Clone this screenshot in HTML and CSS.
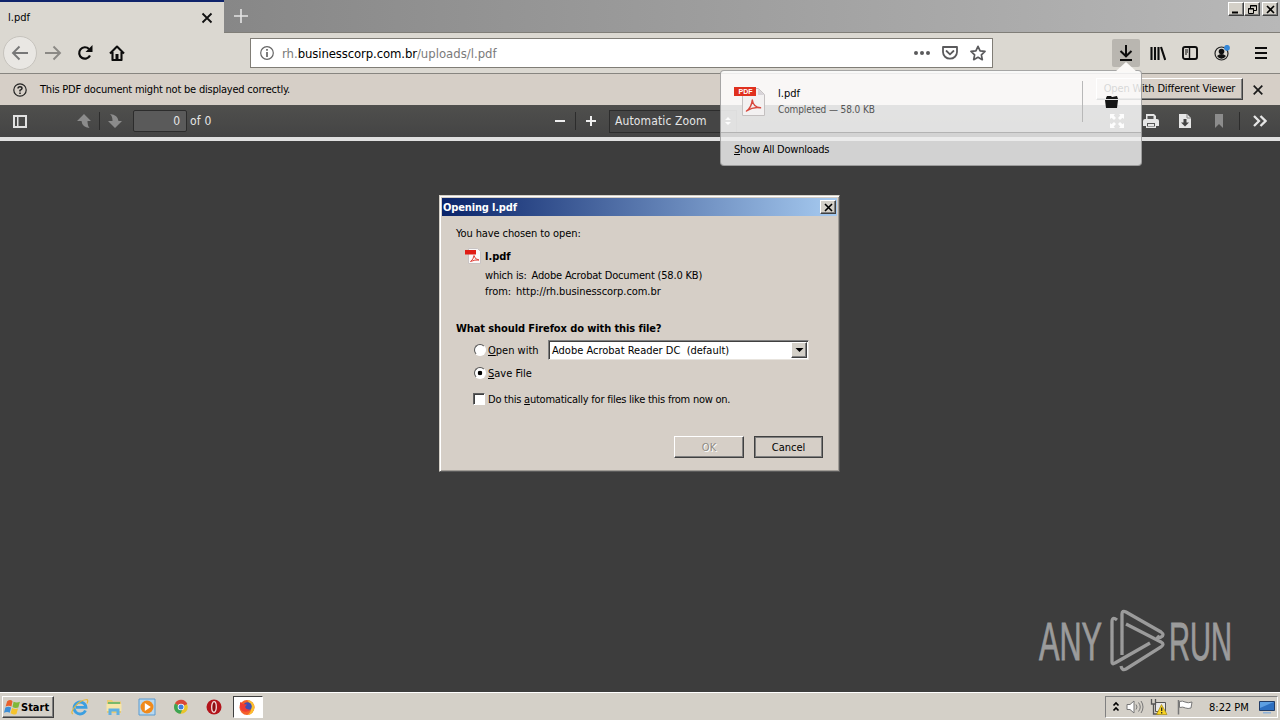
FILE: index.html
```html
<!DOCTYPE html>
<html lang="en">
<head>
    <meta charset="UTF-8">
    <title>l.pdf</title>
    <link rel="stylesheet" href="styles.css">
</head>
<body>

    <!-- tabs -->
    <div class="tabstrip">
        <div class="tab">
            <span class="tab-title">l.pdf</span>
            <svg width="12" height="12" viewBox="0 0 12 12"><path d="M1.5 1.5l9 9M10.5 1.5l-9 9" stroke="#111" stroke-width="1.8"/></svg>
        </div>
        <svg class="new-tab" width="14" height="14" viewBox="0 0 14 14"><path d="M7 0v14M0 7h14" stroke="#e4e4e4" stroke-width="1.6"/></svg>
        <div class="win-buttons">
            <span class="win-btn"><svg width="13" height="11"><path d="M2 8.500h6" stroke="#000" stroke-width="2"/></svg></span>
            <span class="win-btn"><svg width="13" height="11"><path d="M4.500 4V1.500h6v5H8M4 2h7M2.500 4.500h5v5h-5zM2 5h6" fill="none" stroke="#000"/></svg></span>
            <span class="win-btn last"><svg width="13" height="11"><path d="M3 2l7 7M10 2l-7 7" stroke="#000" stroke-width="1.6"/></svg></span>
        </div>
    </div>

    <!-- navigation -->
    <div class="navbar">
        <div class="back"><svg width="18" height="16" viewBox="0 0 18 16"><path d="M17 8H2M8.500 1.500L2 8l6.500 6.500" fill="none" stroke="#777" stroke-width="1.9"/></svg></div>
        <svg class="forward" width="18" height="16" viewBox="0 0 18 16"><path d="M1 8h15M9.500 1.500L16 8l-6.500 6.500" fill="none" stroke="#8b8985" stroke-width="1.9"/></svg>
        <svg class="reload" width="16" height="16" viewBox="0 0 16 16"><path d="M13 10.500A5.700 5.700 0 1 1 12 4" fill="none" stroke="#0c0c0c" stroke-width="2.2"/><path d="M15.500 0v7h-7z" fill="#0c0c0c"/></svg>
        <svg class="home" width="16" height="16" viewBox="0 0 16 16"><path d="M1 8.500L8 1.500l7 7M3.500 7v8h9V7" fill="none" stroke="#0c0c0c" stroke-width="2.1" stroke-linejoin="round"/><path d="M6.500 9h3v5h-3z" fill="#0c0c0c"/></svg>
        <div class="urlbar">
            <svg width="14" height="14" viewBox="0 0 14 14"><circle cx="7" cy="7" r="6.3" fill="none" stroke="#666" stroke-width="1.2"/><path d="M7 6v5M7 3v1.800" stroke="#666" stroke-width="1.7"/></svg>
            <div class="url">rh.<b>businesscorp.com.br</b>/uploads/l.pdf</div>
            <svg width="16" height="16" viewBox="0 0 16 16" fill="#5a5a5c"><circle cx="2" cy="8" r="2"/><circle cx="8" cy="8" r="2"/><circle cx="14" cy="8" r="2"/></svg>
            <svg width="16" height="16" viewBox="0 0 16 16" fill="none" stroke="#5a5a5c" stroke-width="1.8"><path d="M1 2h14v5a7 6.700 0 0 1-14 0z" stroke-linejoin="round"/><path d="M4.500 6L8 9.300 11.500 6" stroke-linecap="round"/></svg>
            <svg width="16" height="16" viewBox="0 0 16 16"><path d="M8 1.300l2.100 4.500 4.900.6-3.600 3.400.9 4.900L8 12.300l-4.300 2.400.9-4.900L1 6.400l4.900-.6z" fill="none" stroke="#5a5a5c" stroke-width="1.7" stroke-linejoin="round"/></svg>
        </div>
        <div class="nav-tools">
            <div class="downloads"><svg width="16" height="18" viewBox="0 0 16 18"><path d="M8 1v11M2.500 7L8 12.300 13.500 7M2 16h12" fill="none" stroke="#0c0c0c" stroke-width="2"/></svg></div>
            <svg width="16" height="16" viewBox="0 0 16 16"><path d="M1.500 2v13M5 2v13M8.500 2v13M11 2l4.200 13" stroke="#0c0c0c" stroke-width="2.1"/></svg>
            <svg width="16" height="16" viewBox="0 0 16 16" fill="none" stroke="#0c0c0c"><rect x="1" y="2" width="14" height="12" rx="2" stroke-width="1.9"/><path d="M7.500 2v12" stroke-width="1.4"/><path d="M3 5h3M3 7h3M3 9h2"/></svg>
            <svg width="16" height="16" viewBox="0 0 16 16"><circle cx="7.5" cy="8.5" r="6.5" fill="none" stroke="#222" stroke-width="1.2"/><circle cx="7.5" cy="6.5" r="2.8" fill="#111"/><path d="M3 11q4.500-4 9 0-1.800 2.700-4.500 2.700T3 11z" fill="#111"/><circle cx="13" cy="2.8" r="2.9" fill="#3387d8"/></svg>
            <svg class="menu-icon" width="12" height="14" viewBox="0 0 12 14"><path d="M0 2h12M0 7h12M0 12h12" stroke="#0c0c0c" stroke-width="2"/></svg>
        </div>
    </div>

    <!-- notification -->
    <div class="notice">
        <svg width="14" height="14" viewBox="0 0 14 14"><circle cx="7" cy="7" r="6.2" fill="none" stroke="#222" stroke-width="1.2"/><path d="M5 5.500Q5 3.700 7 3.700T9 5.400Q9 6.300 7 7.300V8.500M7 9.500v1.500" fill="none" stroke="#222" stroke-width="1.5"/></svg>
        <span class="notice-text">This PDF document might not be displayed correctly.</span>
        <div class="viewer-btn">Open With Different Viewer</div>
        <svg width="10" height="10" viewBox="0 0 10 10"><path d="M.7.7l8.600 8.600M9.300.7L.7 9.300" stroke="#1a1a1a" stroke-width="1.7"/></svg>
    </div>

    <!-- pdf toolbar -->
    <div class="pdfbar">
        <svg class="sidebar-icon" width="14" height="13" viewBox="0 0 14 13"><path d="M0 0h14v13H0zM2 2v9h2V2zM5.500 2v9H12V2z" fill="#e2e2e2" fill-rule="evenodd"/></svg>
        <svg class="page-up" width="14" height="14" viewBox="0 0 14 14"><path d="M7 0l7 7h-3.500q0 5 2 7Q5 13 4.500 7H0z" fill="#8c8c8c"/></svg>
        <i class="sep"></i>
        <svg class="page-down" width="14" height="14" viewBox="0 0 14 14"><path d="M7 14l7-7h-3.500Q10 1 2 0q2.500 2 2.500 7H0z" fill="#8c8c8c"/></svg>
        <div class="page-input">0</div>
        <span class="page-count">of 0</span>
        <svg class="zoom-out" width="10" height="10"><path d="M0 5h10" stroke="#eee" stroke-width="2"/></svg>
        <i class="sep"></i>
        <svg class="zoom-in" width="10" height="10"><path d="M0 5h10M5 0v10" stroke="#eee" stroke-width="2"/></svg>
        <div class="zoom-select"><span>Automatic Zoom</span><svg width="6" height="8"><path d="M3 0l3 3H0zM0 5h6L3 8z" fill="#eee"/></svg></div>
        <div class="pdf-tools">
            <svg width="14" height="14" viewBox="0 0 14 14"><path d="M0 0h5L3.700 1.500 6 4 4 6 1.500 3.700 0 5zM14 0v5l-1.500-1.300L10 6 8 4l2.300-2.500L9 0zM0 14V9l1.500 1.300L4 8l2 2-2.300 2.500L5 14zM14 14H9l1.300-1.500L8 10l2-2 2.500 2.300L14 9z" fill="#eee"/></svg>
            <svg class="print" width="16" height="14" viewBox="0 0 16 14"><path d="M3 0h8l2 2v3H3zM0 7q0-2 2-2h12q2 0 2 2v5h-3v2H3v-2H0z" fill="#e6e6e6"/><path d="M4.500 2h6v3h-6zM4 9h8v3.500H4z" fill="#555"/><path d="M5 10h6v2H5z" fill="#e6e6e6"/></svg>
            <svg class="save-pdf" width="12" height="14" viewBox="0 0 12 14"><path d="M0 0h8l4 4v10H0z" fill="#e6e6e6"/><path d="M8 0v4h4" fill="none" stroke="#888"/><path d="M4.500 5h3v3.500H10L6 12.500 2 8.500h2.500z" fill="#444"/></svg>
            <svg class="bookmark" width="8" height="14" viewBox="0 0 8 14"><path d="M0 0h8v14l-4-4-4 4z" fill="#8c8c8c"/></svg>
            <i class="sep"></i>
            <svg width="14" height="12" viewBox="0 0 14 12"><path d="M1 1l5 5-5 5M7.500 1l5 5-5 5" fill="none" stroke="#e6e6e6" stroke-width="2.3"/></svg>
        </div>
    </div>

    <div class="viewer"></div>

    <!-- taskbar -->
    <div class="taskbar">
        <div class="start">
            <svg width="17" height="17" viewBox="0 0 16 16"><path d="M3 2q3-2 5 0L7 7Q4.500 5.500 1.500 7z" fill="#e8602c"/><path d="M9 2.500q3 1.500 6 0L13.500 8q-3 1-5.500-.5z" fill="#7fb83a"/><path d="M1.300 8q3-1.500 5.400 0l-1.300 5Q3 11.500 0 13z" fill="#3d8ed6"/><path d="M7.600 8.500q2.700 1.500 5.600.5l-1.500 5q-3 1.300-5.500-.5z" fill="#f5c32c"/></svg>
            <b>Start</b>
        </div>
        <div class="launch">
            <svg width="18" height="18" viewBox="0 0 18 18"><path d="M14.500 12.500A6 6 0 1 1 15 9.300H5" fill="none" stroke="#3c9fe0" stroke-width="2.8"/><path d="M2 16Q-1 15 4 8.500T16 1.500q1.500 1 0 4" fill="none" stroke="#e5b93c" stroke-width="1.2"/></svg>
            <svg width="18" height="18" viewBox="0 0 18 18"><path d="M2 2h5l1 1.500h8V15H2z" fill="#e9cb74"/><path d="M3 4h12v2H3z" fill="#79b96a"/><path d="M1.500 6h15v7h-15z" fill="#f7e6a8"/><path d="M3.500 17v-6.500h11V17h-3v-3.500h-5V17z" fill="#5fb0e2"/></svg>
            <svg width="18" height="18" viewBox="0 0 18 18"><path d="M1 1h16v16H1z" fill="#b7d8f0" stroke="#5b9bd0"/><circle cx="9" cy="9" r="6.5" fill="#f08a1c"/><path d="M6.800 5l6 4-6 4z" fill="#fff"/></svg>
            <svg width="18" height="18" viewBox="0 0 18 18"><circle cx="9" cy="9" r="6.8" fill="#e9c52b"/><path d="M9 9L3 5.500a6.800 6.800 0 0 1 12.300.5z" fill="#d8483a"/><path d="M9 9L3 5.500A6.800 6.800 0 0 0 8.500 15.800L11 10z" fill="#3da453"/><circle cx="9" cy="9" r="3.3" fill="#fff"/><circle cx="9" cy="9" r="2.5" fill="#3f7fdc"/></svg>
            <svg width="18" height="18" viewBox="0 0 18 18"><circle cx="9" cy="9" r="7.5" fill="#b3141b"/><ellipse cx="9" cy="9" rx="2.3" ry="5.3" fill="#8c0d12" stroke="#f4dede" stroke-width="1.3"/></svg>
        </div>
        <div class="task-active">
            <svg width="18" height="18" viewBox="0 0 18 18"><circle cx="9" cy="9.5" r="7.5" fill="#f5602a"/><path d="M9 2q7 1 7.500 7-.5 7-7 8 5-4 3-9T9 2z" fill="#fbc02e"/><circle cx="9.5" cy="8.5" r="4.3" fill="#3e4fb5"/><path d="M2 4l3 2 4 .5-2 2.500q1 3 5 2.300-2 3.500-6 2.200T2 8z" fill="#ee3b34"/></svg>
        </div>
        <div class="tray">
            <svg width="8" height="12" viewBox="0 0 8 12"><path d="M1.500 4.500L4 2l2.500 2.500M1.500 9.500L4 7l2.500 2.500" fill="none" stroke="#000" stroke-width="1.7"/></svg>
            <svg width="18" height="16" viewBox="0 0 18 16" fill="none" stroke="#777"><path d="M1 5.500h3L8 2v12L4 10.500H1z" fill="#fff"/><path d="M10 5.500q2 2.500 0 5M12.500 3.500q3.500 4.500 0 9M15 2q4 6 0 12"/></svg>
            <svg width="18" height="18" viewBox="0 0 18 18"><path d="M5.500 4.500h10v9h-10z" fill="#e8e8e8" stroke="#555"/><path d="M1.500 1v5h4V1M3.500 6v10h5" fill="none" stroke="#555" stroke-width="1.3"/><path d="M11.500 6.500l5.500 10H6.500z" fill="#f7d321" stroke="#a88a10" stroke-width=".7"/><path d="M11.700 9.500v3.500M11.700 14v1.500" stroke="#222" stroke-width="1.2"/></svg>
            <svg width="18" height="18" viewBox="0 0 18 18"><path d="M2.500 2v14.500" stroke="#777" stroke-width="1.5"/><path d="M3.500 3.500q3-1 5.500.5 3 1.500 7 0l-1 6q-3 1-5.500 0-2.500-1.500-6-.5z" fill="#fff" stroke="#777"/></svg>
            <span class="clock">8:22 PM</span>
            <svg width="16" height="14" viewBox="0 0 16 14"><path d="M.5 1.500h15v9H.5z" fill="#2d6fc0" stroke="#223c66"/><path d="M1 2h14L1 8z" fill="#5d9fe2"/><path d="M4 12h8v1.500H4z" fill="#8fb2d8"/></svg>
        </div>
    </div>

    <!-- downloads panel -->
    <div class="panel">
        <svg class="panel-arrow" width="22" height="10" viewBox="0 0 22 10"><path d="M0 10L11 0l11 10z" fill="#fbf9f7"/></svg>
        <div class="dl-item">
            <svg class="dl-icon" width="32" height="32" viewBox="0 0 32 32"><path d="M8.500 2.500h16l6 6v21h-22z" fill="#f3f1f1" stroke="#c4c0c0"/><path d="M24 2.500v6.500h6.500z" fill="#d8d4d8"/><path d="M0 1h22v9H0z" fill="#e0301e"/><text x="4.5" y="8.2">PDF</text><path d="M12.500 25q5-3.500 5.800-11 .8 7 8.200 7.800-7-1.500-14 3.200z" fill="none" stroke="#d8473c" stroke-width="1.5" stroke-linejoin="round"/></svg>
            <div class="dl-info">
                <div class="dl-name">l.pdf</div>
                <div class="dl-status">Completed — 58.0 KB</div>
            </div>
            <div class="dl-action"><svg width="14" height="13" viewBox="0 0 14 13"><path d="M1 3l1-2h4l1 1 5-1 1 3H1zM0 5h13l-1 8H1z" fill="#151515"/></svg></div>
        </div>
        <div class="dl-all"><u>S</u>how All Downloads</div>
    </div>

    <!-- file dialog -->
    <div class="dialog">
        <div class="dialog-title">
            <b>Opening l.pdf</b>
            <span class="win-btn"><svg width="13" height="11"><path d="M3 2l7 7M10 2l-7 7" stroke="#000" stroke-width="1.6"/></svg></span>
        </div>
        <div class="dialog-body">
            <div class="row intro">You have chosen to open:</div>
            <div class="row file">
                <svg width="16" height="16" viewBox="0 0 16 16"><path d="M3.500.5h9l3 3v12h-12z" fill="#faf8f8" stroke="#c9c4c4"/><path d="M0 2h11v4.500H0z" fill="#e01c14"/><path d="M5.500 13.500q3-2 3.500-6 .6 4 5 4.500-4-.5-8.500 1.500z" fill="none" stroke="#e0433a"/></svg>
                <b>l.pdf</b>
            </div>
            <div class="row which"><span>which is:</span><span class="value">Adobe Acrobat Document (58.0 KB)</span></div>
            <div class="row from"><span>from:</span><span class="value">http://rh.businesscorp.com.br</span></div>
            <div class="row question"><b>What should Firefox do with this file?</b></div>
            <div class="row open">
                <i class="radio"></i><span class="open-label"><u>O</u>pen with</span>
                <div class="select"><span>Adobe Acrobat Reader DC&nbsp; (default)</span><span class="win-btn drop"><svg width="11" height="12"><path d="M1.500 4h8l-4 4z" fill="#000"/></svg></span></div>
            </div>
            <div class="row save"><i class="radio checked"></i><span><u>S</u>ave File</span></div>
            <div class="row auto"><i class="checkbox"></i><span class="auto-label">Do this <u>a</u>utomatically for files like this from now on.</span></div>
            <div class="buttons">
                <div class="btn disabled">OK</div>
                <div class="btn focus">Cancel</div>
            </div>
        </div>
    </div>

    <!-- watermark -->
    <svg class="watermark" width="200" height="64" viewBox="0 0 200 64">
        <text x="1" y="51" textLength="63" lengthAdjust="spacingAndGlyphs">ANY</text>
        <path d="M79 11q-5-4-5 2v40q0 3 3 1l35-20M84 46V5q0-4 4-2l35 20q4 3 0 5-2 1-4-1M88 15l35 18q4 2 0 5L88 60q-4 2-5-3"/>
        <text x="131" y="51" textLength="63" lengthAdjust="spacingAndGlyphs">RUN</text>
    </svg>

</body>
</html>
```
FILE: styles.css
```css
* { box-sizing: border-box; }
body { margin: 0; width: 1280px; height: 720px; overflow: hidden; display: flex; flex-direction: column; background: #3d3d3d; color: #000; font: 11px "DejaVu Sans Condensed", "DejaVu Sans", sans-serif; white-space: nowrap; }
svg { display: block; flex: none; }
b { font-weight: bold; }
u { text-underline-offset: 1px; }

/* tabs */
.tabstrip { height: 33px; flex: none; display: flex; background: linear-gradient(90deg, #878787 224px, #a6a6a6 70%, #b8b8b8); border-bottom: 1px solid #807e78; }
.tab { width: 224px; height: 33px; display: flex; align-items: center; justify-content: space-between; padding: 0 11px 0 8px; border-top: 2px solid #0f246b; background: #dbd8d1; }
.new-tab { margin: 9px 0 0 10px; }
.win-buttons { margin: 2px 2px 0 auto; display: flex; }
.win-btn { width: 16px; height: 14px; flex: none; display: flex; align-items: center; justify-content: center; background: #d4d0c8; border: 1px solid; border-color: #fff #404040 #404040 #fff; box-shadow: inset -1px -1px #808080; }
.win-btn.last { margin-left: 2px; }

/* navigation */
.navbar { height: 41px; flex: none; display: flex; align-items: center; background: #dbd8d1; border-bottom: 1px solid #878580; padding-left: 3px; }
.back { width: 34px; height: 34px; display: flex; align-items: center; justify-content: center; border-radius: 50%; background: #e9e7e3; border: 1px solid #c6c3bd; }
.forward { margin-left: 7px; }
.reload { margin-left: 15px; }
.home { margin-left: 16px; }
.urlbar { width: 743px; height: 30px; margin-left: 125px; display: flex; align-items: center; gap: 12px; padding: 0 6px 0 9px; background: #fff; border: 1px solid #807d76; }
.url { flex: 1; margin-left: -4px; font-size: 13px; color: #7a7a7a; }
.url b { font-weight: normal; color: #000; letter-spacing: -.12px; }
.nav-tools { margin: 0 13px 0 auto; display: flex; align-items: center; gap: 16px; }
.downloads { width: 28px; height: 28px; margin-right: -6px; display: flex; align-items: center; justify-content: center; background: #b9b6b0; border-radius: 2px; }
.menu-icon { margin-left: 9px; }

/* notification */
.notice { height: 31px; flex: none; display: flex; align-items: center; padding: 0 17px 0 13px; background: #d6cfc7; }
.notice-text { margin-left: 13px; letter-spacing: -.22px; }
.viewer-btn { width: 147px; height: 22px; margin: -2px 10px 0 auto; line-height: 20px; text-align: center; letter-spacing: -.15px; border: 1px solid; border-color: #fff #404040 #404040 #fff; box-shadow: inset -1px -1px #808080; }

/* pdf toolbar */
.pdfbar { height: 36px; flex: none; display: flex; align-items: center; background: linear-gradient(#4f4f4d, #444); border-bottom: 4px solid #e0e0e0; padding: 0 13px; color: #e6e6e6; }
.sep { width: 1px; height: 18px; background: #2c2c2c; }
.page-up { margin-left: 50px; }
.page-up + .sep { margin: 0 8px; }
.page-input { width: 54px; height: 22px; margin-left: 11px; padding-right: 6px; line-height: 20px; text-align: right; font-size: 12px; background: #5a5a5a; border: 1px solid #2c2c2c; border-radius: 2px; }
.page-count { width: 22px; margin-left: 3px; font-size: 12px; letter-spacing: .2px; }
.zoom-out { margin-left: 343px; }
.zoom-out + .sep { margin: 0 10px; }
.zoom-select { width: 128px; height: 23px; margin-left: 13px; padding: 0 5px; display: flex; align-items: center; justify-content: space-between; font-size: 12px; letter-spacing: .12px; background: #454545; border: 1px solid #2c2c2c; }
.pdf-tools { margin-left: auto; display: flex; align-items: center; }
.print { margin-left: 19px; }
.save-pdf { margin-left: 20px; }
.bookmark { margin-left: 24px; }
.pdf-tools .sep { margin: 0 13px 0 16px; }

.viewer { flex: 1; background: #3d3d3d; }

/* taskbar */
.taskbar { height: 28px; flex: none; display: flex; align-items: center; background: #d4d0c8; border-top: 1px solid #fff; padding: 1px 2px 0; }
.start { width: 52px; height: 22px; display: flex; align-items: center; padding-left: 1px; border: 1px solid; border-color: #fff #404040 #404040 #fff; box-shadow: inset -1px -1px #808080; }
.launch { margin: 0 10px 0 17px; display: flex; gap: 15.6px; }
.task-active { width: 30px; height: 22px; padding: 1px 4px; background: #fff; border: 1px solid; border-color: #404040 #fff #fff #404040; }
.tray { width: 173px; height: 22px; margin-left: auto; display: flex; align-items: center; gap: 6px; padding: 0 1px 0 6px; border: 1px solid; border-color: #808080 #fff #fff #808080; }
.tray svg:nth-child(3) { margin-right: 2px; }
.clock { margin: 0 4px 0 9px; }

/* downloads panel */
.panel { position: absolute; left: 720px; top: 70px; width: 422px; height: 96px; background: rgba(255, 255, 255, .84); border: 1px solid rgba(110, 110, 110, .6); border-radius: 4px; }
.panel-arrow { position: absolute; left: 394px; top: -9px; }
.dl-item { height: 62px; display: flex; align-items: center; padding-left: 13px; border-bottom: 1px solid #b3b3b3; }
.dl-info { flex: 1; margin: 0 0 0 12px; }
.dl-name { line-height: 17px; }
.dl-status { line-height: 16px; font-size: 10px; color: #555; letter-spacing: -.1px; }
.dl-icon text { font: bold 7px "Liberation Sans", sans-serif; fill: #fff; }
.dl-action { width: 59px; height: 41px; display: flex; align-items: center; justify-content: center; border-left: 1px solid #b8b8b8; }
.dl-all { height: 32px; line-height: 33px; padding-left: 13px; letter-spacing: -.24px; background: rgba(0, 0, 0, .06); }

/* file dialog */
.dialog { position: absolute; left: 439px; top: 195px; width: 401px; height: 277px; padding: 1px; background: #d6cfc7; border: 1px solid; border-color: #d4d0c8 #5a5a5a #5a5a5a #d4d0c8; box-shadow: inset 1px 1px #fff, inset -1px -1px #a09c96; }
.dialog-title { height: 18px; margin: 1px 1px 0; display: flex; align-items: center; justify-content: space-between; padding: 0 1px 0 1px; color: #fff; background: linear-gradient(90deg, #0a246a, #a6caf0); }
.dialog-title b { letter-spacing: -.15px; }
.dialog-body { padding: 8px 15px 0 15px; }
.row { height: 18px; display: flex; align-items: center; }
.intro { letter-spacing: -.1px; }
.file { margin: 5px 0 1px 9px; gap: 4px; }
.which, .from { height: 16px; margin-left: 29px; }
.which { margin-top: 2px; gap: 5px; letter-spacing: -.18px; }
.from { gap: 5px; letter-spacing: -.06px; }
.value { padding-top: 1px; }
.question { margin-top: 20px; letter-spacing: -.1px; }
.open { height: 20px; margin: 3px 0 0 18px; }
.radio { width: 12px; height: 12px; margin-right: 2px; border-radius: 50%; background: #fff; border: 1px solid; border-color: #555 #fff #fff #555; }
.checked { background: radial-gradient(circle, #000 2px, #fff 2.6px); }
.select { width: 261px; height: 20px; margin-left: auto; margin-right: 14px; padding: 0 1px 0 3px; display: flex; align-items: center; justify-content: space-between; background: #fff; border: 1px solid; border-color: #808080 #e8e4de #e8e4de #808080; box-shadow: inset 1px 1px #404040; }
.drop { height: 16px; }
.save { margin: 4px 0 0 18px; }
.auto { margin: 8px 0 0 17px; }
.auto-label { letter-spacing: -.24px; }
.checkbox { width: 12px; height: 12px; margin-right: 3px; background: #fff; border: 1px solid; border-color: #606060 #fff #fff #606060; box-shadow: inset 1px 1px #404040; }
.buttons { margin-top: 28px; display: flex; justify-content: flex-end; gap: 10px; }
.btn { width: 70px; height: 22px; line-height: 21px; text-align: center; border: 1px solid; border-color: #fff #404040 #404040 #fff; box-shadow: inset -1px -1px #808080; }
.disabled { color: #8f8b84; text-shadow: 1px 1px #fff; }
.focus { width: 69px; border-color: #404040; box-shadow: inset 1px 1px #808080, inset -1px -1px #808080; }

/* watermark */
.watermark { position: absolute; left: 1038px; top: 609px; overflow: visible; }
.watermark text { font: 53px "Liberation Sans", sans-serif; fill: #9b9b9b; stroke: #9b9b9b; stroke-width: .9; }
.watermark path { fill: none; stroke: #9b9b9b; stroke-width: 3.3; }
```
